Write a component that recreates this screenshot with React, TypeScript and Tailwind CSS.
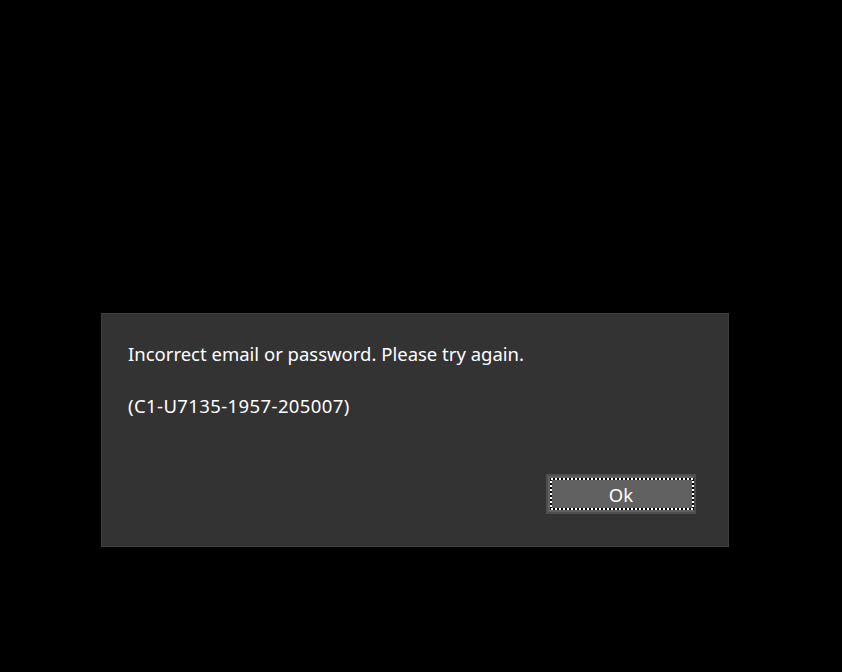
export default function App() {
  return (
    <div className="w-[842px] h-[672px] bg-black flex flex-col" style={{ fontFamily: '"Noto Sans", "Open Sans", sans-serif' }}>
      <div className="ml-[101px] mt-[313px] w-[628px] h-[234px] bg-[#333333] border border-[#3e3e3e] flex flex-col pl-[26px] pr-[32px] pt-[26px]">
        <p className="text-[18.5px] leading-[28px] text-white">Incorrect email or password. Please try again.</p>
        <p className="text-[18.5px] leading-[28px] text-white mt-[24px] tracking-[0.4px]">(C1-U7135-1957-205007)</p>
        <div className="flex justify-end mt-[54px]">
          <button className="relative w-[150px] h-[40px] bg-[#616161] border-2 border-[#4e4e4e] flex items-center justify-center text-[18.5px] text-white leading-none">
            <span className="pt-[3px]">Ok</span>
            <svg className="absolute left-[2px] top-[2px]" width="144" height="32" viewBox="0 0 144 32">
              <rect x="1" y="1" width="142" height="30" fill="none" stroke="#000" strokeWidth="2" />
              <rect x="1" y="1" width="142" height="30" fill="none" stroke="#fff" strokeWidth="2" strokeDasharray="2 2" />
            </svg>
          </button>
        </div>
      </div>
    </div>
  );
}
